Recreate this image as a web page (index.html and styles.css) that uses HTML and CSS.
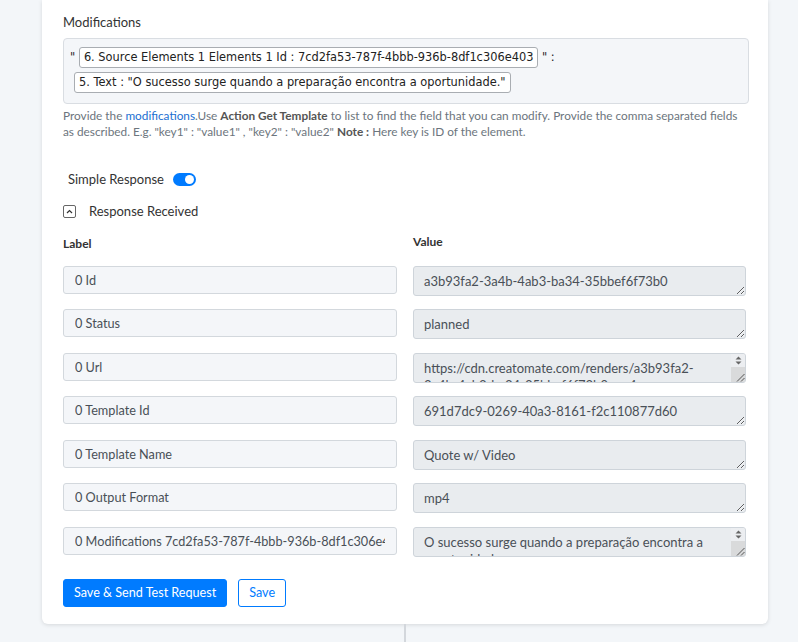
FILE: index.html
```html
<!DOCTYPE html>
<html lang="en">
<head>
    <meta charset="UTF-8">
    <title>Creatomate - Test Request</title>
    <link rel="stylesheet" href="styles.css">
</head>
<body>

    <div class="page">
        <div class="card">

            <!-- Modifications field -->
            <div class="field-label">Modifications</div>
            <div class="mods-box">
                <div class="mods-line">" <span class="token">6. Source Elements 1 Elements 1 Id : 7cd2fa53-787f-4bbb-936b-8df1c306e403</span> " :</div>
                <div class="mods-line second"><span class="token">5. Text : "O sucesso surge quando a preparação encontra a oportunidade."</span></div>
            </div>
            <p class="help">Provide the <a href="#">modifications</a>.Use <b>Action Get Template</b> to list to find the field that you can modify. Provide the comma separated fields as described. E.g. "key1" : "value1" , "key2" : "value2" <b>Note :</b> Here key is ID of the element.</p>

            <!-- Response options -->
            <div class="simple-response">
                <span>Simple Response</span>
                <span class="toggle"><span class="knob"></span></span>
            </div>
            <div class="response-received">
                <span class="chevron-box">
                    <svg width="7" height="5" viewBox="0 0 7 5"><path d="M1 4 L3.5 1.5 L6 4" fill="none" stroke="#333" stroke-width="1.2"/></svg>
                </span>
                <span>Response Received</span>
            </div>

            <!-- Response table -->
            <div class="response-grid">
                <div class="col-head">Label</div>
                <div class="col-head value-head">Value</div>

                <input class="label-input" type="text" value="0 Id" readonly>
                <textarea class="value-area" readonly>a3b93fa2-3a4b-4ab3-ba34-35bbef6f73b0</textarea>

                <input class="label-input" type="text" value="0 Status" readonly>
                <textarea class="value-area" readonly>planned</textarea>

                <input class="label-input" type="text" value="0 Url" readonly>
                <div class="value-wrap">
                    <textarea class="value-area scrolling" readonly>https://cdn.creatomate.com/renders/a3b93fa2-3a4b-4ab3-ba34-35bbef6f73b0.mp4</textarea>
                    <div class="scrollbar">
                        <div class="arrows">
                            <svg width="7" height="9" viewBox="0 0 7 9"><path d="M0.5 3.5 L3.5 0.5 L6.5 3.5 Z M0.5 5.5 L3.5 8.5 L6.5 5.5 Z" fill="#666"/></svg>
                        </div>
                        <div class="thumb">
                            <svg width="9" height="9" viewBox="0 0 9 9"><path d="M8.5 1 L1 8.5 M8.5 5 L5 8.5" stroke="#555" stroke-width="1"/></svg>
                        </div>
                    </div>
                </div>

                <input class="label-input" type="text" value="0 Template Id" readonly>
                <textarea class="value-area" readonly>691d7dc9-0269-40a3-8161-f2c110877d60</textarea>

                <input class="label-input" type="text" value="0 Template Name" readonly>
                <textarea class="value-area" readonly>Quote w/ Video</textarea>

                <input class="label-input" type="text" value="0 Output Format" readonly>
                <textarea class="value-area" readonly>mp4</textarea>

                <input class="label-input" type="text" value="0 Modifications 7cd2fa53-787f-4bbb-936b-8df1c306e403" readonly>
                <div class="value-wrap">
                    <textarea class="value-area scrolling" readonly>O sucesso surge quando a preparação encontra a oportunidade.</textarea>
                    <div class="scrollbar">
                        <div class="arrows">
                            <svg width="7" height="9" viewBox="0 0 7 9"><path d="M0.5 3.5 L3.5 0.5 L6.5 3.5 Z M0.5 5.5 L3.5 8.5 L6.5 5.5 Z" fill="#666"/></svg>
                        </div>
                        <div class="thumb">
                            <svg width="9" height="9" viewBox="0 0 9 9"><path d="M8.5 1 L1 8.5 M8.5 5 L5 8.5" stroke="#555" stroke-width="1"/></svg>
                        </div>
                    </div>
                </div>
            </div>

            <div class="actions">
                <button class="btn btn-primary">Save &amp; Send Test Request</button>
                <button class="btn btn-outline">Save</button>
            </div>

        </div>
        <div class="connector"></div>
    </div>

</body>
</html>
```

FILE: styles.css
```css
body { margin: 0; background-color: #f3f6f9; font-family: Lato, "Open Sans", sans-serif; color: #333; overflow: hidden; }
.page { width: 726px; margin-left: 42px; }
.card { background-color: #fff; padding: 12px 19px 17px 21px; border-radius: 0 0 6px 6px; box-shadow: 0 1px 4px rgba(0,0,0,0.12); }
.connector { width: 2px; height: 20px; background-color: #d3d7dc; margin: 0 auto; }

.field-label { font-size: 13px; line-height: 20px; margin-bottom: 6px; }
.mods-box { background-color: #f4f6f9; border: 1px solid #d9dde2; border-radius: 4px; padding: 8px 10px 10px 6px; font-family: "DejaVu Sans", Verdana, sans-serif; font-size: 11.4px; color: #222; }
.mods-line { line-height: 20px; }
.mods-line.second { margin-top: 4px; margin-left: 4px; }
.token { display: inline-block; background-color: #fff; border: 1px solid #a9adb2; border-radius: 3px; padding: 0 4px; line-height: 19px; }

.help { margin: 4px 0 0; font-size: 11.8px; line-height: 16px; color: #6c757d; }
.help a { color: #1b6fd1; text-decoration: none; }
.help b { color: #555; }

.simple-response { display: flex; align-items: center; gap: 9px; margin: 29px 0 0 5px; font-size: 13px; line-height: 20px; }
.toggle { position: relative; width: 23px; height: 13px; border-radius: 7px; background-color: #007bff; }
.toggle .knob { position: absolute; right: 2px; top: 2px; width: 9px; height: 9px; border-radius: 50%; background-color: #fff; }

.response-received { display: flex; align-items: center; gap: 13px; margin-top: 12px; font-size: 13px; line-height: 20px; }
.chevron-box { display: flex; align-items: center; justify-content: center; width: 11px; height: 11px; border: 1px solid #666; border-radius: 2px; }

.response-grid { display: grid; grid-template-columns: 334px 333px; column-gap: 16px; row-gap: 13.5px; margin-top: 13px; }
.col-head { font-size: 12px; font-weight: bold; line-height: 20px; margin-bottom: -2px; }
.value-head { position: relative; top: -2px; }
.label-input, .value-area { box-sizing: border-box; margin: 0; font-family: Lato, "Open Sans", sans-serif; color: #495057; border-radius: 3px; outline: none; }
.label-input { height: 28px; padding: 0 11px; font-size: 12.7px; background-color: #f4f6f9; border: 1px solid #d3d8dd; }
.value-area { display: block; width: 100%; height: 30px; padding: 6px 10px; font-size: 13px; line-height: 17px; background-color: #e9ecef; border: 1px solid #ced4da; resize: vertical; overflow: hidden; }
.value-area.scrolling { padding-right: 25px; }

.value-wrap { position: relative; }
.scrollbar { position: absolute; top: 1px; right: 1px; bottom: 1px; width: 14px; display: flex; flex-direction: column; border-radius: 0 2px 2px 0; overflow: hidden; }
.scrollbar .arrows { height: 13px; display: flex; align-items: center; justify-content: center; background-color: #eceef1; }
.scrollbar .thumb { flex: 1; display: flex; align-items: flex-end; justify-content: flex-end; background-color: #d9dadb; }

.actions { display: flex; gap: 11px; margin-top: 22px; }
.btn { height: 28px; padding: 0 10px; font-family: Lato, "Open Sans", sans-serif; font-size: 12.6px; border-radius: 3px; cursor: pointer; }
.btn-primary { background-color: #007bff; border: 1px solid #007bff; color: #fff; }
.btn-outline { background-color: #fff; border: 1px solid #007bff; color: #007bff; }
```
